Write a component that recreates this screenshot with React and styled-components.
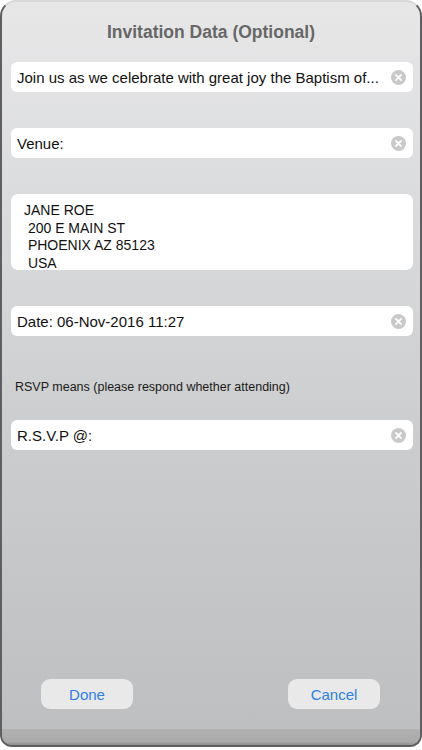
import React from "react";
import styled, { createGlobalStyle } from "styled-components";

const Global = createGlobalStyle`
  html, body { margin: 0; padding: 0; background: #ffffff; }
  body { font-family: "Liberation Sans", Arial, sans-serif; }
`;

const Frame = styled.div`
  width: 422px;
  height: 750px;
  box-sizing: border-box;
  padding: 0 0 3px 0;
  background: #ffffff;
`;

const Panel = styled.div`
  height: 100%;
  box-sizing: border-box;
  display: flex;
  flex-direction: column;
  border-radius: 16px 16px 12px 12px;
  border: 2px solid #5f5f61;
  border-top-color: #d8d8d9;
  background: linear-gradient(to bottom, #e7e7e8 0%, #d9dadc 30%, #cbcccd 60%, #bfc0c2 95%, #bcbdbf 100%);
  overflow: hidden;
`;

const Title = styled.h1`
  margin: 18px 0 0 0;
  height: 24px;
  text-align: center;
  font-size: 17.5px;
  font-weight: bold;
  color: #676768;
  line-height: 24px;
`;

const Field = styled.div`
  margin: ${(p) => p.$top}px 7px 0 9px;
  height: 30px;
  background: #ffffff;
  border-radius: 6px;
  display: flex;
  align-items: center;
  padding: 0 7px 0 6px;
`;

const FieldText = styled.span`
  flex: 1;
  font-size: 15px;
  color: #111;
  white-space: nowrap;
  overflow: hidden;
`;

const ClearIcon = () => (
  <svg width="15" height="15" viewBox="0 0 15 15">
    <circle cx="7.5" cy="7.5" r="7.5" fill="#c9c9cc" />
    <path d="M5 5 L10 10 M10 5 L5 10" stroke="#fff" strokeWidth="1.8" strokeLinecap="round" />
  </svg>
);

const Address = styled.div`
  margin: 36px 7px 0 9px;
  height: 76px;
  background: #ffffff;
  border-radius: 7px;
  padding: 8px 0 0 13px;
  box-sizing: border-box;
  overflow: hidden;
  font-size: 14px;
  line-height: 17.5px;
  color: #111;
  white-space: pre;
`;

const Label = styled.div`
  margin: 44px 0 0 13px;
  font-size: 12.5px;
  line-height: 14px;
  color: #1a1a1a;
`;

const Spacer = styled.div`
  flex: 1;
`;

const Buttons = styled.div`
  display: flex;
  justify-content: space-between;
  padding: 0 40px 0 39px;
`;

const Button = styled.button`
  width: 92px;
  height: 30px;
  border: none;
  border-radius: 9px;
  background: #e9e9ea;
  color: #2e7fe2;
  font-family: "Liberation Sans", Arial, sans-serif;
  font-size: 15px;
  padding: 0;
`;

const Footer = styled.div`
  margin-top: 20px;
  height: 16px;
  background: linear-gradient(to bottom, #b1b1b2 0%, #a9a9aa 80%, #8d8d8e 100%);
`;

export default function App() {
  return (
    <Frame>
      <Global />
      <Panel>
        <Title>Invitation Data (Optional)</Title>
        <Field $top={18}>
          <FieldText>Join us as we celebrate with great joy the Baptism of...</FieldText>
          <ClearIcon />
        </Field>
        <Field $top={36}>
          <FieldText>Venue:</FieldText>
          <ClearIcon />
        </Field>
        <Address>{"JANE ROE\n 200 E MAIN ST\n PHOENIX AZ 85123\n USA"}</Address>
        <Field $top={36}>
          <FieldText>Date: 06-Nov-2016 11:27</FieldText>
          <ClearIcon />
        </Field>
        <Label>RSVP means (please respond whether attending)</Label>
        <Field $top={26}>
          <FieldText>R.S.V.P @:</FieldText>
          <ClearIcon />
        </Field>
        <Spacer />
        <Buttons>
          <Button>Done</Button>
          <Button>Cancel</Button>
        </Buttons>
        <Footer />
      </Panel>
    </Frame>
  );
}
